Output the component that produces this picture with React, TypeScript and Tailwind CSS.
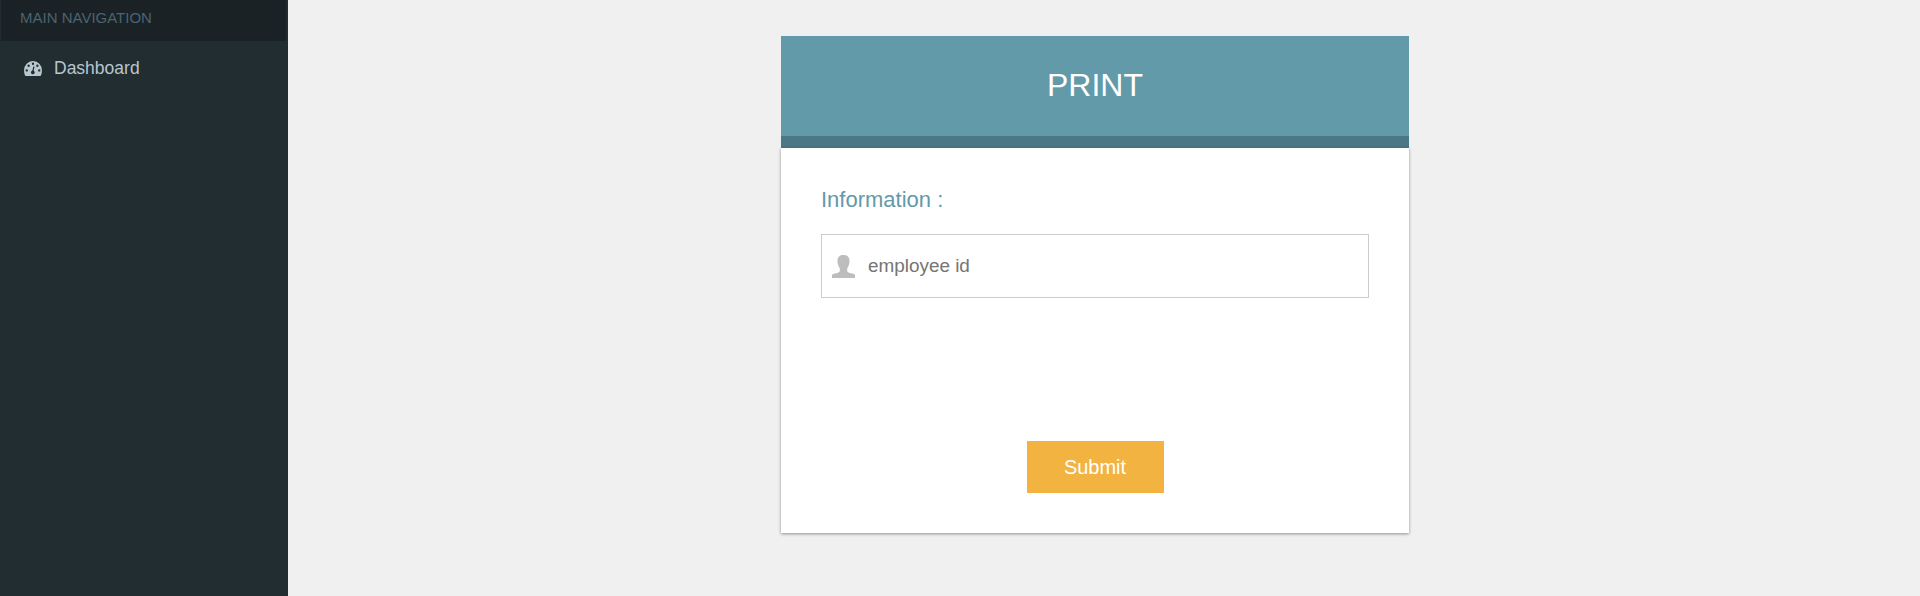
import React from "react";

function GaugeIcon() {
  return (
    <svg viewBox="0 0 19 15" preserveAspectRatio="none" className="h-[15px] w-[18px] shrink-0">
      <path
        d="M9.500 0A9.400 9.400 0 0 0 0 9.400c0 1.800.4 3.400 1 4.900.2.500.5.700 1 .7h15c.5 0 .8-.2 1-.7.6-1.500 1-3.100 1-4.900A9.400 9.400 0 0 0 9.500 0Z"
        fill="#b8c7ce"
      />
      <g fill="#222d32">
        <circle cx="2.900" cy="9.400" r="1.200" />
        <circle cx="4.900" cy="4.800" r="1.200" />
        <circle cx="9.500" cy="2.800" r="1.200" />
        <circle cx="14.100" cy="4.800" r="1.200" />
        <circle cx="16.100" cy="9.400" r="1.200" />
        <circle cx="9.300" cy="11.400" r="1.900" />
        <path d="m8.600 10.500 1.300-5 1.200.3-1.200 5z" />
      </g>
    </svg>
  );
}

function PersonIcon() {
  return (
    <svg viewBox="0 0 23 23" className="h-[23px] w-[23px] shrink-0" fill="#bdbdbd">
      <path d="M11.500 0C7.800 0 5.500 2 5.500 5.800c0 3.200.9 5.700 2.300 7.700v2.300c0 1.100-.8 1.700-2.500 2.100C2.300 18.500 0 18.600 0 20.300V23h23v-2.700c0-1.700-2.300-1.800-5.300-2.400-1.700-.4-2.500-1-2.500-2.100v-2.300c1.400-2 2.300-4.500 2.300-7.700C17.500 2 15.200 0 11.500 0Z" />
    </svg>
  );
}

export default function App() {
  return (
    <div className="flex h-[596px] w-full overflow-hidden bg-[#f0f0f0] font-['Liberation_Sans',Arial,sans-serif]">
      <aside className="w-72 shrink-0 bg-[#222d32]">
        <div className="ml-px h-[41px] w-[285px] bg-[#1a2226] pt-[7px] pl-[19px] text-[15px] leading-[22px] text-[#4b646f]">
          MAIN NAVIGATION
        </div>
        <a href="#" className="flex h-[55px] items-center pl-6 text-[#b8c7ce]">
          <GaugeIcon />
          <span className="ml-3 text-[17.500px]">Dashboard</span>
        </a>
      </aside>
      <main className="flex-1 pt-9 pl-[493px]">
        <div className="w-[628px]">
          <h1 className="flex h-28 items-center justify-center border-b-[12px] border-[#4b7884] bg-[#639aa9] pb-[3px] text-[32px] text-white">
            PRINT
          </h1>
          <form
            className="relative flex h-[385px] flex-col bg-white px-10 pt-[38px] shadow-[0_1px_3px_0_rgba(0,0,0,0.4)]"
            onSubmit={(e) => e.preventDefault()}
          >
            <h2 className="text-[22px] leading-7 text-[#639aa9]">Information :</h2>
            <label className="mt-5 flex h-16 items-center border border-[#cccccc] pl-[10px]">
              <PersonIcon />
              <input
                placeholder="employee id"
                className="ml-[13px] flex-1 bg-transparent text-[18.900px] outline-none placeholder:text-[#757575]"
              />
            </label>
            <button className="mt-[143px] ml-[206px] h-[52px] w-[137px] bg-[#f3b340] pr-px text-[20px] text-white">
              Submit
            </button>
          </form>
        </div>
      </main>
    </div>
  );
}
